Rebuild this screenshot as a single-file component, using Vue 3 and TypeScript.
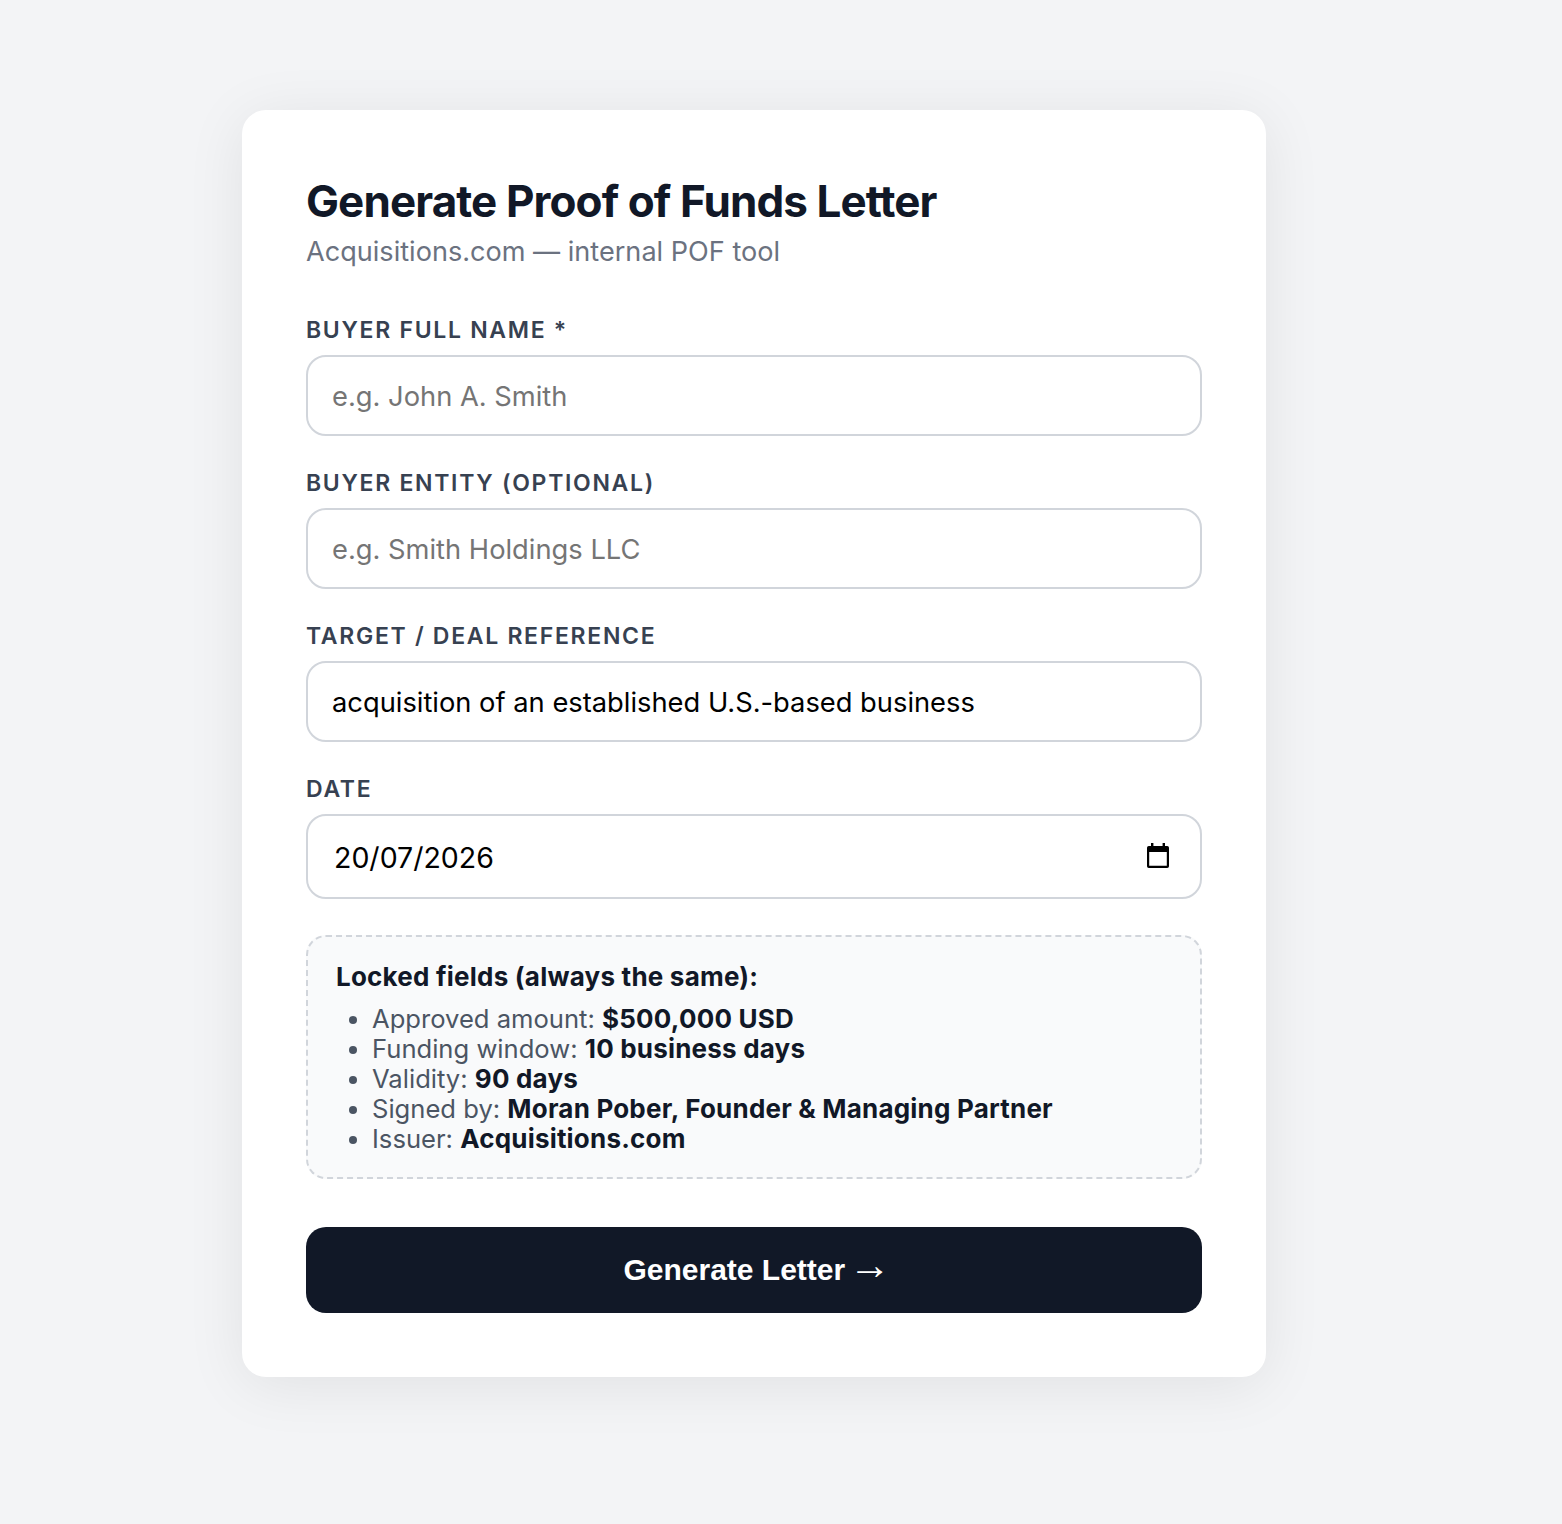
<script setup lang="ts">
const fields = [
  { label: 'Buyer Full Name *', placeholder: 'e.g. John A. Smith', value: '' },
  { label: 'Buyer Entity (optional)', placeholder: 'e.g. Smith Holdings LLC', value: '' },
  { label: 'Target / Deal Reference', placeholder: '', value: 'acquisition of an established U.S.-based business' },
]
const locked = [
  { key: 'Approved amount:', val: '$500,000 USD' },
  { key: 'Funding window:', val: '10 business days' },
  { key: 'Validity:', val: '90 days' },
  { key: 'Signed by:', val: 'Moran Pober, Founder & Managing Partner' },
  { key: 'Issuer:', val: 'Acquisitions.com' },
]
</script>

<template>
  <div class="page">
    <form class="card" @submit.prevent>
      <h1 class="title">Generate Proof of Funds Letter</h1>
      <p class="sub">Acquisitions.com — internal POF tool</p>

      <div v-for="f in fields" :key="f.label" class="field">
        <label class="label">{{ f.label }}</label>
        <input class="input" type="text" :placeholder="f.placeholder" :value="f.value" />
      </div>

      <div class="field date-wrap">
        <label class="label">Date</label>
        <div class="date">
          <span class="date-text">20/07/2026</span>
          <svg class="cal" width="22" height="25" viewBox="0 0 22 25" aria-hidden="true">
            <path fill="#000" fill-rule="evenodd" d="M4 0h2.400v3h9.200V0H18v3h2.200A1.800 1.800 0 0 1 22 4.800v18.400a1.800 1.800 0 0 1-1.800 1.800H1.800A1.800 1.800 0 0 1 0 23.200V4.800A1.800 1.800 0 0 1 1.800 3H4zM2.200 9v13.800h17.600V9z" />
          </svg>
        </div>
      </div>

      <div class="locked">
        <div class="locked-title">Locked fields (always the same):</div>
        <ul class="list">
          <li v-for="l in locked" :key="l.key">{{ l.key }} <strong>{{ l.val }}</strong></li>
        </ul>
      </div>

      <button class="btn" type="submit">Generate Letter <span class="arrow">→</span></button>
    </form>
  </div>
</template>

<style>
html, body { margin: 0; background: #f3f4f6; }
</style>

<style scoped>
.page {
  box-sizing: border-box;
  min-height: 1524px;
  padding: 110px 296px 147px 242px;
  background: #f3f4f6;
  font-family: Inter, "Liberation Sans", sans-serif;
}
.card {
  box-sizing: border-box;
  width: 1024px;
  padding: 64px;
  background: #fff;
  border-radius: 24px;
  box-shadow: 0 8px 60px rgba(0, 0, 0, 0.08);
}
.title {
  margin: 0 0 6px;
  font-size: 44px;
  font-weight: 700;
  color: #111827;
  letter-spacing: -0.9px;
  line-height: 55px;
}
.sub {
  margin: 0 0 45px;
  font-size: 27.100px;
  line-height: 34px;
  color: #6b7280;
}
.field { margin-bottom: 31px; }
.date-wrap { margin-bottom: 36px; }
.label {
  display: block;
  margin-bottom: 8px;
  font-size: 23px;
  line-height: 33px;
  font-weight: 600;
  letter-spacing: 1.700px;
  text-transform: uppercase;
  color: #374151;
}
.input {
  display: block;
  box-sizing: border-box;
  width: 100%;
  height: 81px;
  padding: 2px 24px 0;
  border: 2px solid #d1d5db;
  border-radius: 20px;
  outline: none;
  background: #fff;
  font-family: inherit;
  font-size: 27.300px;
  color: #000;
}
.input::placeholder { color: #757575; opacity: 1; }
.date {
  box-sizing: border-box;
  height: 85px;
  padding: 0 31px 0 26px;
  display: flex;
  align-items: center;
  justify-content: space-between;
  border: 2px solid #d1d5db;
  border-radius: 20px;
  font-size: 28.500px;
  color: #000;
}
.date-text { padding-top: 2px; }
.cal { margin-bottom: 2px; }
.locked {
  box-sizing: border-box;
  height: 244px;
  padding: 24px 28px;
  margin-bottom: 48px;
  background: #f9fafb;
  border: 2px dashed #d1d5db;
  border-radius: 20px;
}
.locked-title {
  margin-bottom: 12px;
  font-size: 26px;
  line-height: 31px;
  font-weight: 700;
  letter-spacing: 0.220px;
  color: #111827;
}
.list {
  margin: 0;
  padding-left: 36px;
  font-size: 25.600px;
  line-height: 30px;
  color: #4b5563;
}
.list strong { font-size: 26px; letter-spacing: 0.200px; font-weight: 700; color: #111827; }
.btn {
  display: block;
  width: 100%;
  height: 86px;
  border: none;
  border-radius: 20px;
  background: #111827;
  color: #fff;
  font-family: "Liberation Sans", Arial, sans-serif;
  font-size: 30px;
  font-weight: 700;
}
.arrow {
  margin: 0 -6px 0 -5px;
  font-size: 42px;
  font-weight: 400;
  line-height: 0;
  vertical-align: 1px;
}
</style>
